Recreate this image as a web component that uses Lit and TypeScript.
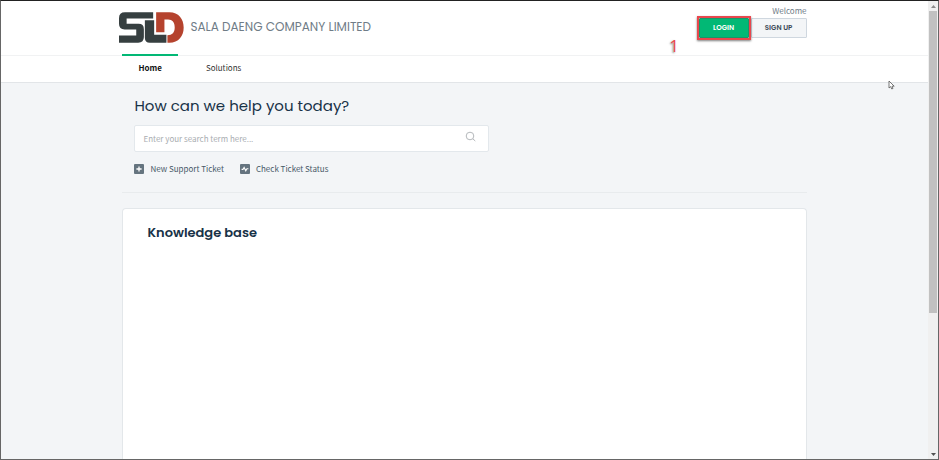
import { LitElement, html, css } from "lit";
import { customElement, state } from "lit/decorators.js";

@customElement("app-logo")
class AppLogo extends LitElement {
  static styles = css`
    :host { display: block; width: 65px; height: 31px; }
    svg { display: block; width: 100%; height: 100%; }
  `;
  render() {
    return html`<svg viewBox="28 36 196 92" role="img" aria-label="Company logo">
      <path fill="#363f40" d="M131 36H46Q28 36 28 54V71Q28 88 45 88H80V106H28V128H86Q103 128 103 111V87Q103 71 87 71H51V55H131Z" />
      <path fill="#363f40" d="M106 60H134V104H171V128H121Q106 128 106 113Z" />
      <path fill="#b5432e" d="M140 36H180C208 36 223 56 223 82S208 128 180 128H174V105C189 105 196 97 196 82S189 58 176 58H165V96H140Z" />
    </svg>`;
  }
}

@customElement("side-scroll")
class SideScroll extends LitElement {
  static styles = css`
    :host { display: flex; flex-direction: column; width: 10px; background: #f0f0f0; }
    svg { display: block; width: 10px; height: 10px; }
    .track { flex: 1; }
    .thumb { height: 69%; margin: 0 1px; background: #c1c1c1; }
  `;
  render() {
    return html`
      <svg viewBox="0 0 10 10" fill="#8a8a8a"><path d="M3 7L5.5 4L8 7Z" /></svg>
      <div class="track"><div class="thumb"></div></div>
      <svg viewBox="0 0 10 10" fill="#505050"><path d="M3 4H8L5.5 7Z" /></svg>
    `;
  }
}

@customElement("app-root")
export class AppRoot extends LitElement {
  static styles = css`
    :host {
      display: block;
      font-family: "Noto Sans CJK SC", "Noto Sans", sans-serif;
      font-size: 8px;
      line-height: 12px;
      color: #475867;
    }
    * { box-sizing: border-box; }
    a { color: inherit; text-decoration: none; }
    .frame {
      display: flex;
      height: 100vh;
      overflow: hidden;
      border: 1px solid #666;
      border-top-color: #222;
      background: #f3f5f7;
      position: relative;
    }
    .page { flex: 1; min-width: 0; display: flex; flex-direction: column; }
    .wrap { width: 73.8%; margin: 0 auto; }
    .top { background: #fff; border-bottom: 1px solid #f1f2f3; }
    .top .wrap { display: flex; justify-content: space-between; height: 54px; }
    .brand { display: flex; align-items: center; gap: 6px; margin-left: -3px; padding-bottom: 2px; }
    .name {
      font-family: Poppins, Inter, sans-serif;
      font-size: 12px;
      line-height: 16px;
      color: #6f7c87;
    }
    .account {
      position: relative;
      display: flex;
      flex-direction: column;
      align-items: flex-end;
      gap: 1px;
      padding-top: 4px;
      color: #6f7c87;
    }
    .buttons { display: flex; gap: 2px; }
    button {
      font: 600 7px/12px Poppins, Inter, sans-serif;
      height: 20px;
      padding: 0;
      border: 1px solid #cfd7df;
      border-radius: 1px;
      background: #f3f5f7;
      color: #394956;
    }
    .login {
      position: relative;
      width: 50px;
      background: #02b875;
      border-color: #17966a;
      color: #fff;
    }
    .login::before {
      content: "";
      position: absolute;
      inset: -3px;
      border: 2px solid #e8474d;
      box-shadow: 0 1px 2px rgba(0, 0, 0, 0.5);
    }
    .signup { width: 56px; }
    .step {
      position: absolute;
      right: 128px;
      top: 35px;
      font: 16px/20px "Noto Sans", sans-serif;
      color: #e8474d;
      text-shadow: 0 0 1px #fff, -1px 1px 2px #777;
    }
    nav { background: #fff; border-bottom: 1px solid #e2e5e8; }
    nav .wrap { display: flex; height: 26px; gap: 12px; color: #333; }
    nav a { padding: 6px 16px; }
    nav a.active {
      font-weight: bold;
      color: #111;
      border-top: 2px solid #02b875;
      margin-top: -2px;
    }
    .help { padding: 13px 12px 17px; border-bottom: 1px solid #e8ebed; }
    h1, h2 { margin: 0; font-family: Poppins, Inter, sans-serif; color: #183247; }
    h1 { font-size: 15px; line-height: 20px; font-weight: 400; }
    .search {
      display: flex;
      align-items: center;
      width: 355px;
      max-width: 100%;
      height: 27px;
      margin-top: 9px;
      padding: 0 12px 0 8px;
      background: #fff;
      border: 1px solid #e3e8ec;
      border-radius: 2px;
    }
    input {
      flex: 1;
      min-width: 0;
      border: 0;
      padding: 0;
      outline: 0;
      font: inherit;
      color: #183247;
      background: transparent;
    }
    input::placeholder { color: #a9adb1; opacity: 1; }
    .search svg { width: 11px; height: 11px; margin-bottom: 4px; }
    .actions { display: flex; gap: 16px; margin-top: 11px; }
    .actions a { display: flex; align-items: center; gap: 6px; }
    .actions svg { width: 10px; height: 10px; }
    .card {
      flex: 1;
      margin-top: 15px;
      padding: 14px 24px;
      background: #fff;
      border: 1px solid #e3e7ea;
      border-bottom: 0;
      border-radius: 4px 4px 0 0;
    }
    h2 { font-size: 13px; line-height: 20px; font-weight: 600; }
    .pointer { position: absolute; right: 43px; top: 79px; width: 7px; height: 10px; }
  `;

  @state() private query = "";

  private onInput(e: Event) {
    this.query = (e.target as HTMLInputElement).value;
  }

  render() {
    return html`
      <div class="frame">
        <div class="page">
          <header class="top">
            <div class="wrap">
              <div class="brand">
                <app-logo></app-logo>
                <span class="name">SALA DAENG COMPANY LIMITED</span>
              </div>
              <div class="account">
                <span>Welcome</span>
                <div class="buttons">
                  <button class="login">LOGIN</button>
                  <button class="signup">SIGN UP</button>
                </div>
                <span class="step">1</span>
              </div>
            </div>
          </header>
          <nav>
            <div class="wrap">
              <a class="active" href="#home">Home</a>
              <a href="#solutions">Solutions</a>
            </div>
          </nav>
          <section class="help wrap">
            <h1>How can we help you today?</h1>
            <div class="search">
              <input type="text" aria-label="Search" placeholder="Enter your search term here..." .value=${this.query} @input=${this.onInput} />
              <svg viewBox="0 0 11 11" fill="none" stroke="#b4b8bb"><circle cx="5" cy="5" r="3.8" /><path d="M7.8 7.8L10.3 10" /></svg>
            </div>
            <div class="actions">
              <a href="#new">
                <svg viewBox="0 0 10 10"><rect width="10" height="10" rx="1" fill="#65747f" /><path d="M5 2.4V7.6M2.4 5H7.6" stroke="#fff" stroke-width="1.3" /></svg>
                New Support Ticket
              </a>
              <a href="#status">
                <svg viewBox="0 0 10 10"><rect width="10" height="10" rx="1" fill="#65747f" /><path d="M1.6 5.4H3L4.1 3.4L5.8 6.8L6.9 4.8H8.4" fill="none" stroke="#fff" stroke-width="1.1" /></svg>
                Check Ticket Status
              </a>
            </div>
          </section>
          <main class="card wrap">
            <h2>Knowledge base</h2>
          </main>
        </div>
        <side-scroll></side-scroll>
        <svg class="pointer" viewBox="0 0 7 10"><path d="M1 1V8L2.7 6.6L3.8 9L5 8.4L4 6.2H6.2Z" fill="#fff" stroke="#555" stroke-width=".8" /></svg>
      </div>
    `;
  }
}
